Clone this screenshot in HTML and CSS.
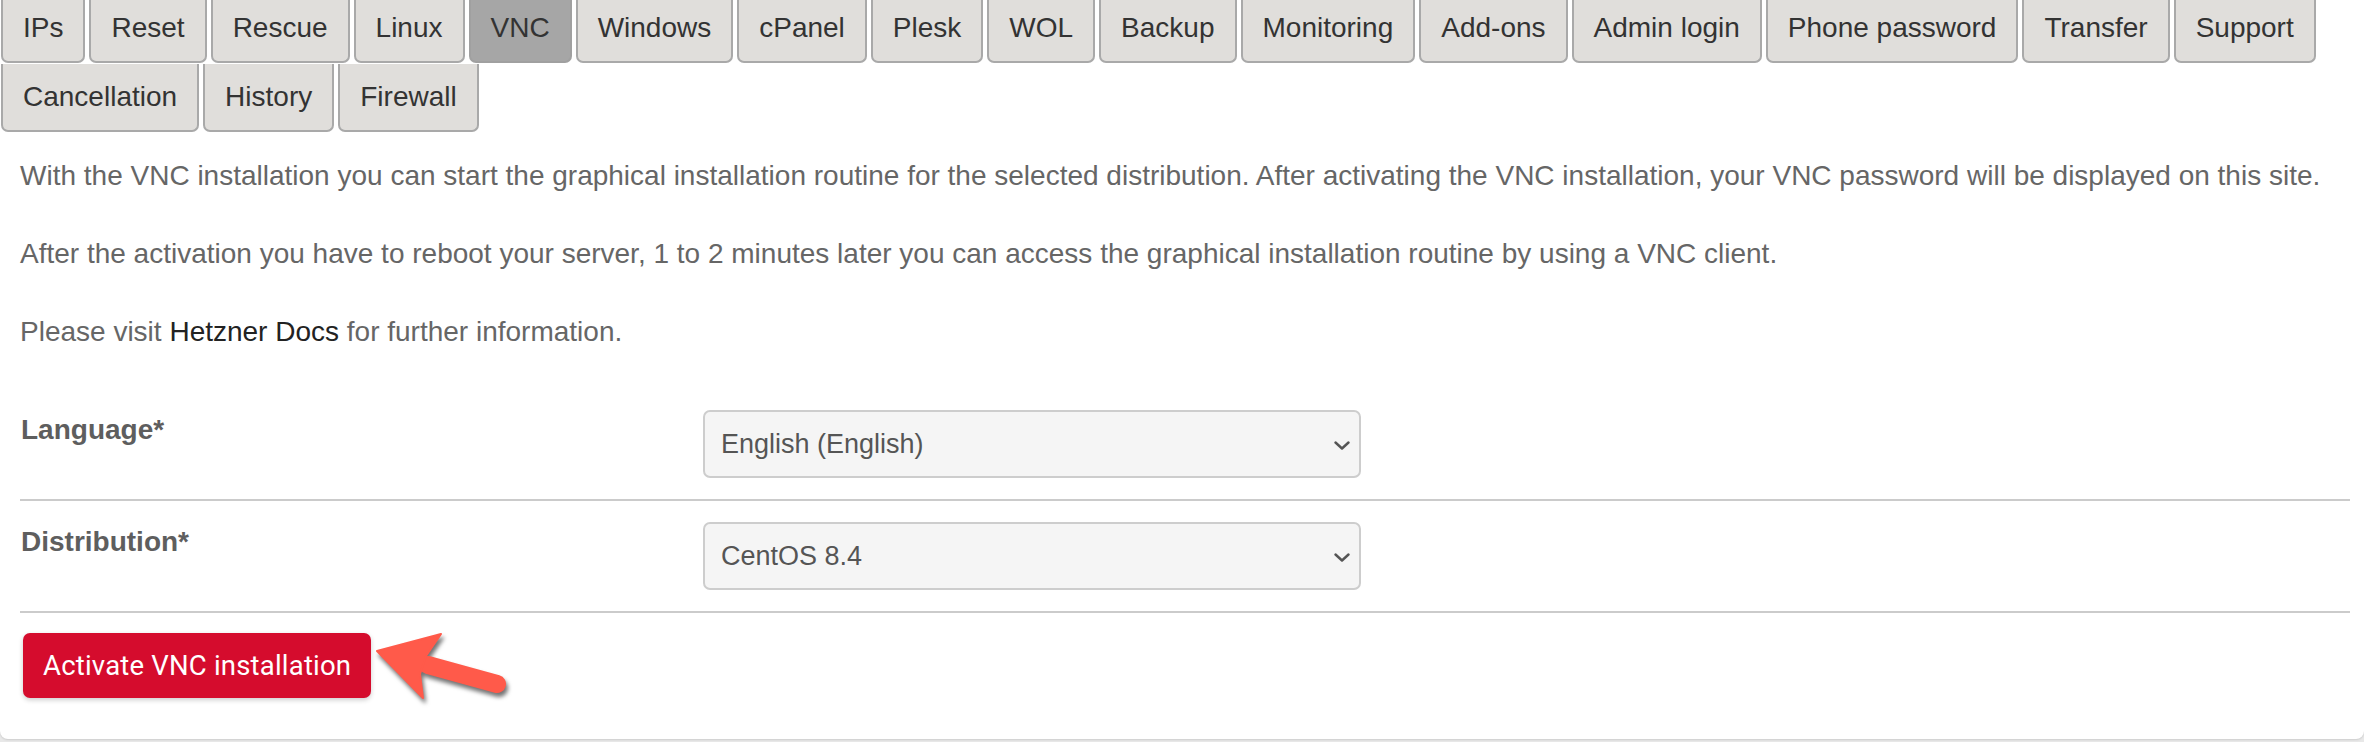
FILE: index.html
```html
<!DOCTYPE html>
<html lang="en">
<head>
<meta charset="utf-8">
<title>VNC</title>
<link rel="stylesheet" href="styles.css">
</head>
<body>
<div class="card">
  <ul class="tabs">
    <li class="tab">IPs</li>
    <li class="tab">Reset</li>
    <li class="tab">Rescue</li>
    <li class="tab">Linux</li>
    <li class="tab active">VNC</li>
    <li class="tab">Windows</li>
    <li class="tab">cPanel</li>
    <li class="tab">Plesk</li>
    <li class="tab">WOL</li>
    <li class="tab">Backup</li>
    <li class="tab">Monitoring</li>
    <li class="tab">Add-ons</li>
    <li class="tab">Admin login</li>
    <li class="tab">Phone password</li>
    <li class="tab">Transfer</li>
    <li class="tab">Support</li>
    <li class="tab">Cancellation</li>
    <li class="tab">History</li>
    <li class="tab">Firewall</li>
  </ul>
  <div class="content">
    <p class="desc">With the VNC installation you can start the graphical installation routine for the selected distribution. After activating the VNC installation, your VNC password will be displayed on this site.</p>
    <p class="desc">After the activation you have to reboot your server, 1 to 2 minutes later you can access the graphical installation routine by using a VNC client.</p>
    <p class="desc">Please visit <a class="link" href="#">Hetzner Docs</a> for further information.</p>
    <div class="form">
      <div class="row">
        <label class="label">Language*</label>
        <div class="select-wrap">
          <select class="select"><option>English (English)</option></select>
          <svg class="chevron" viewBox="0 0 16 9" width="16" height="9"><path d="M1.5 1.5 L8 7.5 L14.5 1.5" fill="none" stroke="#555" stroke-width="2.4" stroke-linecap="round" stroke-linejoin="round"/></svg>
        </div>
      </div>
      <div class="row">
        <label class="label">Distribution*</label>
        <div class="select-wrap">
          <select class="select"><option>CentOS 8.4</option></select>
          <svg class="chevron" viewBox="0 0 16 9" width="16" height="9"><path d="M1.5 1.5 L8 7.5 L14.5 1.5" fill="none" stroke="#555" stroke-width="2.4" stroke-linecap="round" stroke-linejoin="round"/></svg>
        </div>
      </div>
    </div>
    <button class="btn" type="button">Activate VNC installation</button>
  </div>
  <svg class="arrow" viewBox="360 625 160 95" width="160" height="95">
    <line x1="428" y1="670" x2="497" y2="689" stroke="#ff5a4a" stroke-width="18" stroke-linecap="round"/>
    <polygon points="377,656 441,639 426,661 420,679 423,703" fill="#ff5a4a" stroke="#ff5a4a" stroke-width="2" stroke-linejoin="round"/>
  </svg>
</div>
</body>
</html>
```

FILE: styles.css
```css
* { box-sizing: border-box; }
html, body { margin: 0; padding: 0; }
body {
  background: #e8e8e8;
  font-family: "Liberation Sans", Arial, sans-serif;
  overflow: hidden;
  height: 742px;
}
.card {
  position: relative;
  background: #fff;
  border-radius: 0 0 8px 8px;
  box-shadow: 0 1px 2px rgba(0,0,0,0.12);
  padding-bottom: 41px;
}
.tabs {
  list-style: none;
  margin: -5px 0 0 1px;
  padding: 0;
  display: flex;
  flex-wrap: wrap;
  column-gap: 4px;
  row-gap: 1px;
}
.tab {
  height: 68px;
  display: flex;
  align-items: center;
  padding: 0 20px;
  border: 2px solid #a9a9a9;
  border-top: none;
  border-radius: 0 0 7px 7px;
  background: #e0dedb;
  color: #333;
  font-size: 28px;
  white-space: nowrap;
}
.tab.active {
  background: #a6a6a6;
  border-color: #a0a0a0;
}
.content {
  padding: 0 14px 0 20px;
}
.desc {
  margin: 23px 0 36px;
  font-size: 28px;
  line-height: 42px;
  color: #666;
  white-space: nowrap;
}
.desc + .desc { margin-top: 0; }
.link {
  color: #222;
  text-decoration: none;
}
.row {
  display: grid;
  grid-template-columns: 683px 658px;
  align-items: start;
  padding: 21px 0;
  border-bottom: 2px solid #cbcbcb;
}
.label {
  font-size: 28px;
  line-height: 40px;
  font-weight: bold;
  color: #5e5e5e;
  padding-left: 1px;
}
.select-wrap {
  position: relative;
  height: 68px;
}
.select {
  appearance: none;
  -webkit-appearance: none;
  width: 100%;
  height: 68px;
  border: 2px solid #cdcdcd;
  border-radius: 7px;
  background: #f5f5f5;
  padding: 0 40px 0 16px;
  font-family: "Liberation Sans", Arial, sans-serif;
  font-size: 27px;
  color: #555;
  outline: none;
}
.chevron {
  position: absolute;
  right: 11px;
  top: 31px;
  pointer-events: none;
}
.btn {
  display: block;
  margin: 20px 0 0 3px;
  height: 65px;
  padding: 0 20px;
  border: none;
  border-radius: 7px;
  background: #d50c2d;
  color: #fff;
  font-family: Roboto, "Liberation Sans", sans-serif;
  font-size: 27.5px;
  letter-spacing: 0.2px;
  box-shadow: 0 2px 5px rgba(0,0,0,0.2);
}
.arrow {
  position: absolute;
  left: 360px;
  top: 625px;
  filter: drop-shadow(2px 4px 2px rgba(0,0,0,0.55));
}
```
